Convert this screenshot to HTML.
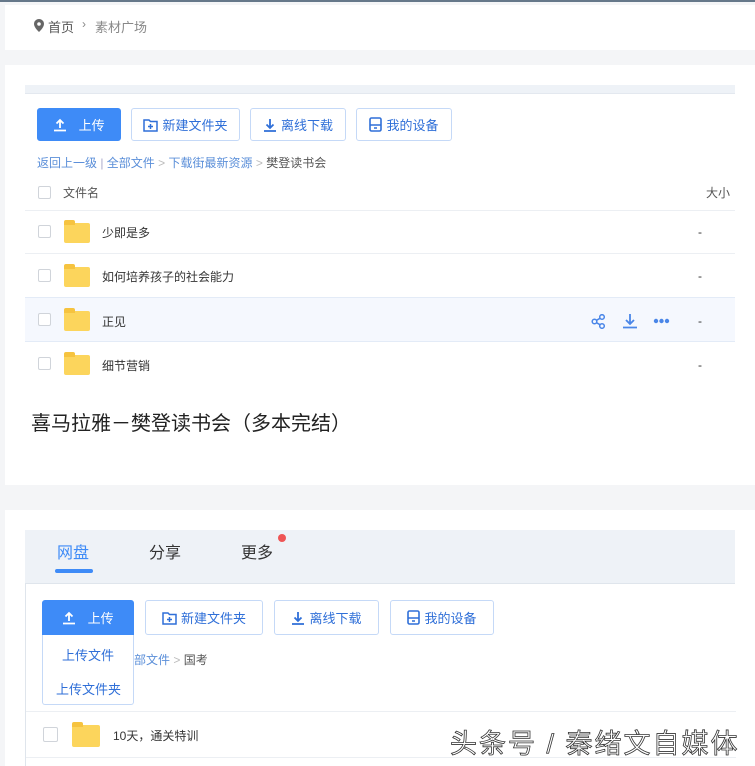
<!DOCTYPE html><html><head><meta charset="utf-8"><style>
*{margin:0;padding:0;box-sizing:border-box}
body{width:755px;height:766px;overflow:hidden;background:#f4f5f7;font-family:"Liberation Sans","Noto Sans CJK SC",sans-serif;position:relative;font-size:12px;color:#333}
.a{position:absolute}
.card{position:absolute;background:#fff;left:5px;right:0}
.btn{position:absolute;height:33px;border:1px solid #c5d9f7;border-radius:3px;background:#fff;color:#2f6fd8;font-size:13px;display:flex;align-items:center;justify-content:center;gap:4px}
.btn.p{background:#3e8bf7;color:#fff;border-color:#3e8bf7}
.cb{position:absolute;width:13px;height:13px;border:1px solid #d0d4da;border-radius:2px;background:#fff}
.fd{position:absolute;width:26px;height:20px;background:#fcd55c;border-radius:2px}
.fd:before{content:"";position:absolute;left:0;top:-3px;width:11px;height:5px;background:#f6c33f;border-radius:2px 2px 0 0}
.line{position:absolute;left:25px;width:710px;height:1px;background:#eceff3}
.t{position:absolute;font-size:12px;color:#333}
</style></head><body>
<div class="a" style="left:0;top:0;width:755px;height:2px;background:#66788a"></div>
<div class="card" style="top:5px;height:45px"></div>
<svg class="a" style="left:34px;top:19px" width="10" height="13" viewBox="0 0 10 13"><path d="M5 0C2.2 0 0 2.2 0 5c0 3.5 5 8 5 8s5-4.5 5-8C10 2.2 7.8 0 5 0z" fill="#666"/><circle cx="5" cy="5" r="1.8" fill="#fff"/></svg>
<div class="t" style="left:48px;top:17px;font-size:13px;color:#555">首页</div>
<div class="t" style="left:82px;top:17px;font-size:12px;color:#888">›</div>
<div class="t" style="left:95px;top:17px;font-size:13px;color:#888">素材广场</div>

<div class="card" style="top:65px;height:420px"></div>
<div class="a" style="left:25px;top:85px;width:710px;height:9px;background:#eef2f7;border-bottom:1px solid #e3e8ef"></div>
<div class="btn p" style="left:37px;top:108px;width:84px"><svg width="14" height="14" viewBox="0 0 14 14"><path d="M7 10V2M3.5 5.5L7 2l3.5 3.5M1 12.5h12" stroke="#fff" stroke-width="1.8" fill="none"/></svg>&nbsp; 上传</div>
<div class="btn" style="left:131px;top:108px;width:109px"><svg width="15" height="14" viewBox="0 0 15 14"><path d="M1 2h5l1.5 1.5H14v9.5H1z" stroke="#2f6fd8" stroke-width="1.5" fill="none"/><path d="M7.5 6v5M5 8.5h5" stroke="#2f6fd8" stroke-width="1.5"/></svg>新建文件夹</div>
<div class="btn" style="left:250px;top:108px;width:96px"><svg width="14" height="14" viewBox="0 0 14 14"><path d="M7 1v9M3.5 6.5L7 10l3.5-3.5M1 13h12" stroke="#2f6fd8" stroke-width="1.8" fill="none"/></svg>离线下载</div>
<div class="btn" style="left:356px;top:108px;width:96px"><svg width="13" height="15" viewBox="0 0 13 15"><rect x="1" y="1" width="11" height="13" rx="1.5" stroke="#2f6fd8" stroke-width="1.6" fill="none"/><path d="M1 8h11M5 11h3" stroke="#2f6fd8" stroke-width="1.6"/></svg>我的设备</div>
<div class="t" style="left:37px;top:154px;color:#5b8fd9">返回上一级 <span style="color:#aac">|</span> 全部文件 <span style="color:#bbb">&gt;</span> 下载街最新资源 <span style="color:#bbb">&gt;</span> <span style="color:#555">樊登读书会</span></div>
<div class="cb" style="left:38px;top:186px"></div>
<div class="t" style="left:63px;top:184px;color:#555">文件名</div>
<div class="t" style="left:706px;top:184px;color:#555">大小</div>
<div class="line" style="top:210px"></div>
<div class="a" style="left:25px;top:297px;width:710px;height:44px;background:#f5f8fe"></div>
<div class="line" style="top:253px"></div><div class="line" style="top:297px;background:#e3ebf7"></div><div class="line" style="top:341px;background:#e3ebf7"></div>
<div class="cb" style="left:38px;top:225px"></div><div class="fd" style="left:64px;top:223px"></div><div class="t" style="left:102px;top:224px">少即是多</div><div class="t" style="left:698px;top:225px">-</div>
<div class="cb" style="left:38px;top:269px"></div><div class="fd" style="left:64px;top:267px"></div><div class="t" style="left:102px;top:268px">如何培养孩子的社会能力</div><div class="t" style="left:698px;top:269px">-</div>
<div class="cb" style="left:38px;top:313px"></div><div class="fd" style="left:64px;top:311px"></div><div class="t" style="left:102px;top:313px">正见</div><div class="t" style="left:698px;top:314px">-</div>
<svg class="a" style="left:591px;top:314px" width="15" height="15" viewBox="0 0 15 15"><circle cx="3.5" cy="7.5" r="2.3" stroke="#4a86e8" stroke-width="1.5" fill="none"/><circle cx="11" cy="3" r="2.3" stroke="#4a86e8" stroke-width="1.5" fill="none"/><circle cx="11" cy="12" r="2.3" stroke="#4a86e8" stroke-width="1.5" fill="none"/><path d="M5.5 6.3l3.5-2M5.5 8.7l3.5 2" stroke="#4a86e8" stroke-width="1.5"/></svg>
<svg class="a" style="left:622px;top:313px" width="16" height="16" viewBox="0 0 16 16"><path d="M8 1v10M4 7l4 4 4-4M1 14.5h14" stroke="#4a86e8" stroke-width="1.8" fill="none"/></svg>
<svg class="a" style="left:653px;top:318px" width="17" height="6"><circle cx="3" cy="3" r="2.2" fill="#4a86e8"/><circle cx="8.5" cy="3" r="2.2" fill="#4a86e8"/><circle cx="14" cy="3" r="2.2" fill="#4a86e8"/></svg>
<div class="cb" style="left:38px;top:357px"></div><div class="fd" style="left:64px;top:355px"></div><div class="t" style="left:102px;top:357px">细节营销</div><div class="t" style="left:698px;top:358px">-</div>
<div class="t" style="left:31px;top:407px;font-size:20px;color:#222">喜马拉雅－樊登读书会（多本完结）</div>

<div class="card" style="top:510px;height:256px"></div>
<div class="a" style="left:25px;top:530px;width:710px;height:54px;background:#eef2f7;border-bottom:1px solid #dfe5ec"></div>
<div class="t" style="left:57px;top:539px;font-size:16px;color:#3e8bf7">网盘</div>
<div class="a" style="left:55px;top:569px;width:38px;height:4px;border-radius:2px;background:#3e8bf7"></div>
<div class="t" style="left:149px;top:539px;font-size:16px;color:#333">分享</div>
<div class="t" style="left:241px;top:539px;font-size:16px;color:#333">更多</div>
<div class="a" style="left:278px;top:534px;width:8px;height:8px;border-radius:50%;background:#ee5555"></div>
<div class="a" style="left:25px;top:584px;width:1px;height:182px;background:#dfe5ec"></div>
<div class="btn p" style="left:42px;top:600px;width:92px;height:35px;border-radius:3px 3px 0 0"><svg width="14" height="14" viewBox="0 0 14 14"><path d="M7 10V2M3.5 5.5L7 2l3.5 3.5M1 12.5h12" stroke="#fff" stroke-width="1.8" fill="none"/></svg>&nbsp; 上传</div>
<div class="a" style="left:42px;top:635px;width:92px;height:70px;border:1px solid #c5d9f7;border-top:none;border-radius:0 0 3px 3px;background:#fff"></div>
<div class="t" style="left:62px;top:645px;font-size:13px;color:#2f6fd8">上传文件</div>
<div class="t" style="left:56px;top:679px;font-size:13px;color:#2f6fd8">上传文件夹</div>
<div class="btn" style="left:145px;top:600px;width:118px;height:35px"><svg width="15" height="14" viewBox="0 0 15 14"><path d="M1 2h5l1.5 1.5H14v9.5H1z" stroke="#2f6fd8" stroke-width="1.5" fill="none"/><path d="M7.5 6v5M5 8.5h5" stroke="#2f6fd8" stroke-width="1.5"/></svg>新建文件夹</div>
<div class="btn" style="left:274px;top:600px;width:105px;height:35px"><svg width="14" height="14" viewBox="0 0 14 14"><path d="M7 1v9M3.5 6.5L7 10l3.5-3.5M1 13h12" stroke="#2f6fd8" stroke-width="1.8" fill="none"/></svg>离线下载</div>
<div class="btn" style="left:390px;top:600px;width:104px;height:35px"><svg width="13" height="15" viewBox="0 0 13 15"><rect x="1" y="1" width="11" height="13" rx="1.5" stroke="#2f6fd8" stroke-width="1.6" fill="none"/><path d="M1 8h11M5 11h3" stroke="#2f6fd8" stroke-width="1.6"/></svg>我的设备</div>
<div class="t" style="left:134px;top:651px;color:#5b8fd9">部文件 <span style="color:#bbb">&gt;</span> <span style="color:#555">国考</span></div>
<div class="line" style="top:711px;left:26px"></div><div class="line" style="top:757px;left:26px"></div>
<div class="cb" style="left:43px;top:727px;width:15px;height:15px"></div><div class="fd" style="left:72px;top:725px;width:28px;height:22px"></div>
<div class="t" style="left:113px;top:727px">10天，通关特训</div>
<div class="t" style="left:450px;top:722px;font-size:27px;color:#fff;-webkit-text-stroke:0.8px #333;letter-spacing:2px;white-space:nowrap">头条号 / 秦绪文自媒体</div>
</body></html>
